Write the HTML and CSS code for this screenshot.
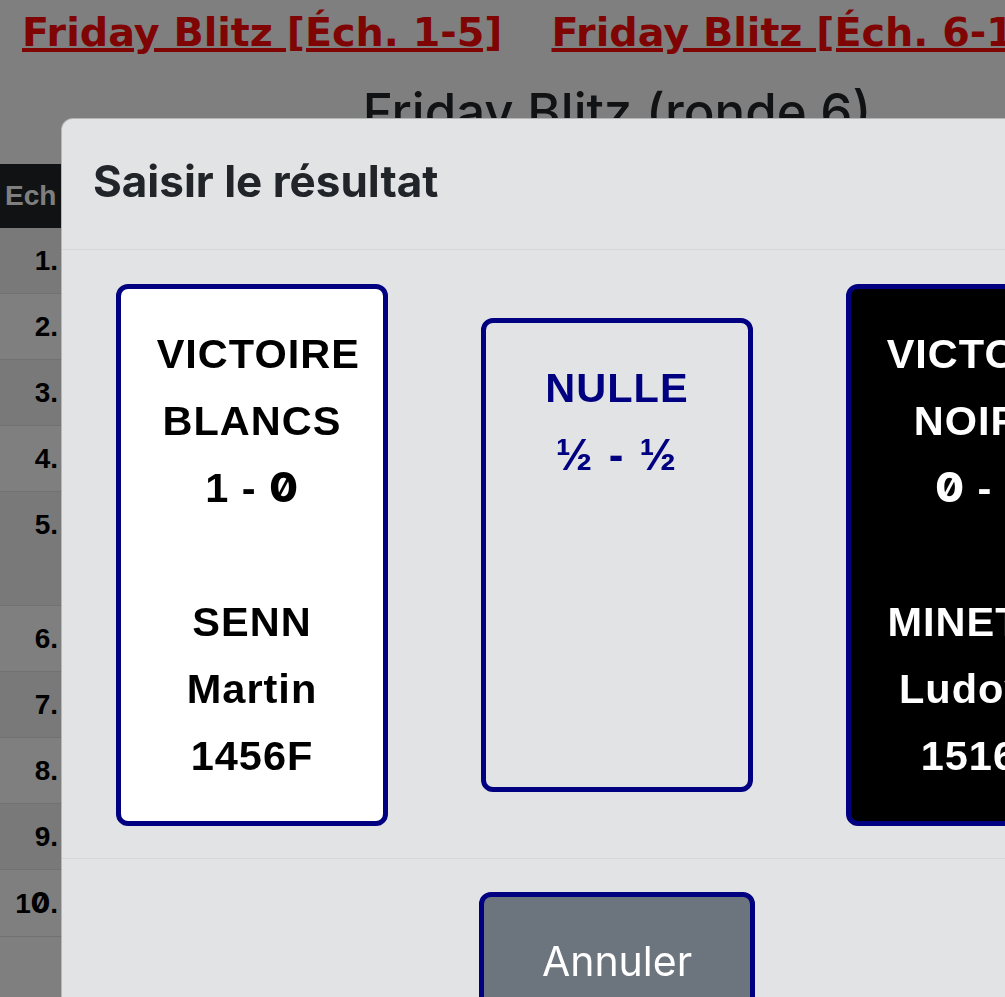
FILE: index.html
```html
<!DOCTYPE html>
<html lang="fr">
<head>
<meta charset="utf-8">
<title>Friday Blitz (ronde 6)</title>
<link rel="stylesheet" href="styles.css">
</head>
<body>
<div class="page">
  <nav class="links">
    <a href="#">Friday Blitz [Éch. 1-5]</a>
    <a href="#">Friday Blitz [Éch. 6-10]</a>
  </nav>
  <h2 class="round-title">Friday Blitz (ronde 6)</h2>
  <table class="pairings">
    <thead>
      <tr><th class="num">Ech</th><th>Blancs</th><th>Résultat</th><th>Noirs</th></tr>
    </thead>
    <tbody>
      <tr><td class="num">1.</td><td>SENN Martin</td><td></td><td>MINETTE Ludovic</td></tr>
      <tr><td class="num">2.</td><td></td><td></td><td></td></tr>
      <tr><td class="num">3.</td><td></td><td></td><td></td></tr>
      <tr><td class="num">4.</td><td></td><td></td><td></td></tr>
      <tr><td class="num">5.</td><td>&nbsp;<br>&nbsp;</td><td></td><td></td></tr>
      <tr><td class="num">6.</td><td></td><td></td><td></td></tr>
      <tr><td class="num">7.</td><td></td><td></td><td></td></tr>
      <tr><td class="num">8.</td><td></td><td></td><td></td></tr>
      <tr><td class="num">9.</td><td></td><td></td><td></td></tr>
      <tr><td class="num">1<span class="z">0</span>.</td><td></td><td></td><td></td></tr>
    </tbody>
  </table>
</div>

<div class="backdrop"></div>

<div class="modal">
  <div class="modal-dialog">
    <div class="modal-header">
      <h5 class="modal-title">Saisir le résultat</h5>
    </div>
    <div class="modal-body">
      <button class="result white">&nbsp;VICTOIRE<br>BLANCS<br>1 - <span class="z">0</span><br><br>SENN<br>Martin<br>1456F</button>
      <button class="result draw">NULLE<br><span class="half">½ - ½</span></button>
      <button class="result black">&nbsp;VICTOIRE<br>NOIRS<br><span class="z">0</span> - 1<br><br>MINETTE<br>Ludovic<br>1516F</button>
    </div>
    <div class="modal-footer">
      <button class="cancel">Annuler</button>
    </div>
  </div>
</div>
</body>
</html>
```

FILE: styles.css
```css
html, body {
  margin: 0;
  padding: 0;
  overflow: hidden;
  height: 100%;
}

body {
  background: #ffffff;
  font-family: "Liberation Sans", Arial, sans-serif;
  color: #212529;
}

.page {
  width: 1234px;
}

.links {
  display: flex;
  gap: 49px;
  padding: 7px 0 0 22px;
  height: 53px;
  align-items: flex-start;
}

.links a {
  font-family: "DejaVu Sans", "Liberation Sans", sans-serif;
  font-weight: 700;
  font-size: 39.7px;
  line-height: 50px;
  color: #ff0a0a;
  text-decoration: underline;
  text-decoration-thickness: 4px;
  text-underline-offset: 2px;
  white-space: nowrap;
}

.round-title {
  margin: 22px 0 0;
  text-align: center;
  font-family: "Inter", sans-serif;
  font-weight: 500;
  font-size: 51px;
  line-height: 60px;
  color: #212529;
  height: 82px;
}

.pairings {
  border-collapse: collapse;
  width: 1234px;
  font-family: "Liberation Sans", Arial, sans-serif;
  font-size: 28px;
  font-weight: 700;
}

.pairings th {
  background: #212529;
  color: #ffffff;
  height: 64px;
  padding: 0 6px;
  text-align: left;
  line-height: 40px;
}

.pairings th.num {
  padding-left: 5px;
  width: 53px;
}

.pairings td {
  padding: 9px 6px 8px;
  line-height: 48px;
  border-bottom: 1px solid #dee2e6;
  vertical-align: top;
}

.pairings td.num {
  text-align: right;
  color: #000;
  padding-right: 6px;
}

.pairings tbody tr:nth-child(odd) td {
  background: #f2f2f2;
}

.z {
  font-family: "Inter", sans-serif;
  font-feature-settings: "zero" 1;
  font-variant-numeric: slashed-zero;
  font-weight: 800;
}

.backdrop {
  position: fixed;
  inset: 0;
  background: rgba(0, 0, 0, 0.5);
}

.modal {
  position: fixed;
  inset: 0;
  overflow: hidden;
}

.modal-dialog {
  width: 1112px;
  margin: 118px 0 0 61px;
  background: #e2e3e5;
  border: 1px solid rgba(0, 0, 0, 0.2);
  border-radius: 12px;
  box-sizing: border-box;
}

.modal-header {
  padding: 34px 31px 35px;
  border-bottom: 1px solid #d5d7da;
}

.modal-title {
  margin: 0;
  font-family: "Inter", sans-serif;
  font-weight: 700;
  font-size: 44px;
  line-height: 61px;
  color: #212529;
  position: relative;
  top: -2px;
}

.modal-body {
  display: flex;
  justify-content: center;
  align-items: center;
  gap: 93px;
  padding: 34px 0 32px;
}

.result {
  width: 272px;
  box-sizing: border-box;
  border: 5px solid #000080;
  border-radius: 12px;
  padding: 30.5px 0 32.5px;
  font-family: "Liberation Sans", Arial, sans-serif;
  font-weight: 700;
  font-size: 41.5px;
  letter-spacing: 1px;
  line-height: 67px;
  text-align: center;
  flex: none;
  white-space: nowrap;
}

.result.white {
  background: #ffffff;
  color: #000000;
}

.result.draw {
  background: transparent;
  color: #000080;
  min-height: 474px;
  display: flex;
  flex-direction: column;
  justify-content: flex-start;
  align-items: center;
}

.result .half {
  font-size: 44px;
  letter-spacing: 2px;
}

.result.black {
  background: #000000;
  color: #ffffff;
}

.modal-footer {
  border-top: 1px solid #d5d7da;
  padding: 33px 0;
  display: flex;
  justify-content: center;
}

.cancel {
  width: 276px;
  box-sizing: border-box;
  border: 5px solid #000080;
  border-radius: 12px;
  background: #6c757d;
  color: #ffffff;
  font-family: "Inter", sans-serif;
  font-weight: 400;
  font-size: 41px;
  line-height: 60px;
  padding: 34px 0;
}
```
